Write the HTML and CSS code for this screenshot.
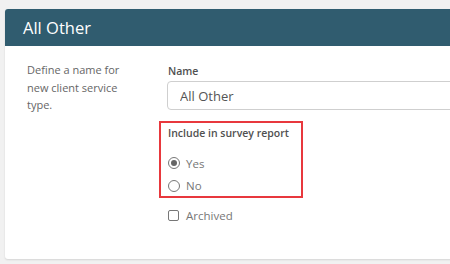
FILE: index.html
```
<!DOCTYPE html>
<html>
<head>
<meta charset="utf-8">
<link rel="stylesheet" href="styles.css">
</head>
<body>
<div class="card">
  <div class="card-header">All Other</div>
  <div class="card-body">
    <p class="desc">Define a name for new client service type.</p>
    <div class="form">
      <label class="label">Name</label>
      <input class="text-input" type="text" value="All Other">
      <div class="highlight">
        <div class="label">Include in survey report</div>
        <div class="options">
          <label class="option"><input class="radio" type="radio" name="survey" checked><span>Yes</span></label>
          <label class="option"><input class="radio" type="radio" name="survey"><span>No</span></label>
        </div>
      </div>
      <label class="option check-row"><input class="checkbox" type="checkbox"><span>Archived</span></label>
    </div>
  </div>
</div>
</body>
</html>
```

FILE: styles.css
```
html, body {
  margin: 0;
  padding: 0;
}
body {
  background: #f1f1f1;
  overflow: hidden;
  width: 450px;
  height: 264px;
  font-family: "Open Sans", "Liberation Sans", sans-serif;
}
.card {
  margin: 9px 0 0 5px;
  width: 520px;
  height: 250px;
  background: #fff;
  border-radius: 3px;
  box-shadow: 0 1px 2px rgba(0,0,0,0.12);
}
.card-header {
  height: 37px;
  background: #305c6f;
  color: #fff;
  font-size: 16.5px;
  padding-left: 18px;
  display: flex;
  align-items: center;
  border-radius: 3px 3px 0 0;
}
.card-body {
  display: flex;
  padding: 15px 0 0 22px;
}
.desc {
  margin: 0;
  width: 110px;
  font-size: 11px;
  line-height: 17.5px;
  color: #666;
}
.form {
  margin-left: 31px;
  padding-top: 3px;
  display: flex;
  flex-direction: column;
  align-items: flex-start;
}
.label {
  font-size: 10.5px;
  line-height: 14px;
  font-weight: 600;
  color: #505050;
  white-space: nowrap;
}
.text-input {
  margin: 3px 0 0 -1px;
  width: 320px;
  height: 29px;
  box-sizing: border-box;
  border: 1px solid #cfcfcf;
  border-radius: 4px;
  padding: 0 12px;
  font-family: inherit;
  font-size: 13px;
  color: #555;
  outline: none;
}
.highlight {
  margin: 11px 0 0 -9px;
  width: 144px;
  box-sizing: border-box;
  border: 2px solid #e8383d;
  padding: 3px 7px 0;
}
.options {
  margin-top: 13px;
  display: flex;
  flex-direction: column;
  gap: 2.5px;
}
.option {
  display: flex;
  align-items: center;
  height: 20px;
  font-size: 11.5px;
  color: #777;
}
.option span {
  margin-left: 6px;
}
.radio {
  appearance: none;
  -webkit-appearance: none;
  margin: 0;
  width: 12px;
  height: 12px;
  border: 1px solid #777;
  border-radius: 50%;
  box-sizing: border-box;
  display: grid;
  place-items: center;
}
.radio:checked::after {
  content: "";
  width: 6px;
  height: 6px;
  border-radius: 50%;
  background: #666;
}
.check-row {
  margin-top: 8px;
}
.checkbox {
  appearance: none;
  -webkit-appearance: none;
  margin: 0 1px 0 0;
  width: 11px;
  height: 11px;
  border: 1px solid #777;
  border-radius: 2px;
  box-sizing: border-box;
}
```
